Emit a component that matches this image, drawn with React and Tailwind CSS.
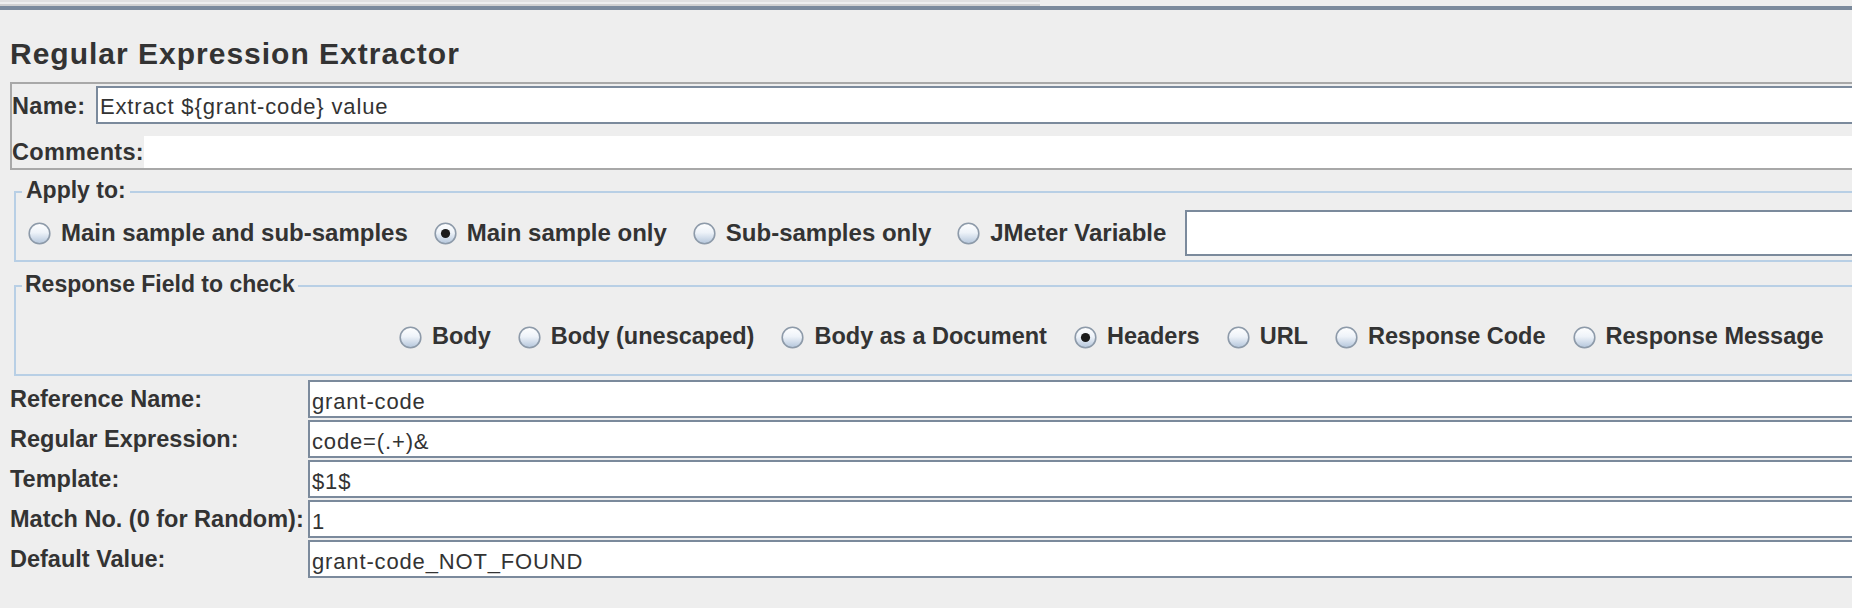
import React from 'react';

function Radio({ checked, label, className = '', textClass = 'text-[23.5px]' }) {
  return (
    <span className={`flex items-center ${className}`}>
      <svg width="23" height="23" viewBox="0 0 23 23" className="shrink-0">
        <defs>
          <linearGradient id="radioFill" x1="0" y1="0" x2="0" y2="1">
            <stop offset="0%" stopColor="#ffffff" />
            <stop offset="45%" stopColor="#eef3f9" />
            <stop offset="100%" stopColor="#b3c5db" />
          </linearGradient>
        </defs>
        <circle cx="11.5" cy="11.5" r="10.3" fill="url(#radioFill)" stroke="#8d9aa9" strokeWidth="1.6" />
        {checked && <circle cx="11.5" cy="11.5" r="4.6" fill="#1c1c1c" />}
      </svg>
      <span className={`ml-[10px] whitespace-nowrap font-bold leading-none ${textClass}`}>{label}</span>
    </span>
  );
}

function Field({ label, value }) {
  return (
    <div className="mb-[2px] flex h-[38px]">
      <div className="w-[298px] shrink-0 whitespace-nowrap pt-[8px] text-[23.5px] font-bold leading-none">
        {label}
      </div>
      <div className="flex-1 whitespace-nowrap border-y-2 border-l-2 border-[#7b8a9c] bg-white pl-[2px] pt-[9px] text-[22px] leading-none tracking-[0.85px]">
        {value}
      </div>
    </div>
  );
}

export default function App() {
  const applyTo = [
    { label: 'Main sample and sub-samples', checked: false },
    { label: 'Main sample only', checked: true },
    { label: 'Sub-samples only', checked: false },
  ];

  const responseFields = [
    { label: 'Body', checked: false },
    { label: 'Body (unescaped)', checked: false },
    { label: 'Body as a Document', checked: false },
    { label: 'Headers', checked: true },
    { label: 'URL', checked: false },
    { label: 'Response Code', checked: false },
    { label: 'Response Message', checked: false },
  ];

  return (
    <div className="h-[608px] w-full overflow-hidden bg-[#eeeeee] font-['Liberation_Sans',Arial,sans-serif] text-[#333333]">
      <div className="w-[1900px]">
        {/* top strips */}
        <div className="h-[2px] w-[1040px] bg-[#e0e0e0]" />
        <div className="h-[2px]" />
        <div className="h-[2px] w-[1040px] bg-[#d0d0d0]" />
        <div className="h-[4px] bg-[#7b8a9c]" />

        {/* Title */}
        <h1 className="mt-[26px] h-[36px] pl-[10px] text-[30px] font-bold leading-[36px] tracking-[1px]">
          Regular Expression Extractor
        </h1>

        {/* Name / Comments */}
        <div className="ml-[10px] mt-[10px] border-y-2 border-l-2 border-[#a8a8a8]">
          <div className="flex h-[40px] pt-[2px]">
            <div className="w-[84px] shrink-0 pt-[9px] text-[23.5px] font-bold leading-none tracking-[0.3px]">Name:</div>
            <div className="h-[38px] flex-1 border-y-2 border-l-2 border-[#7b8a9c] bg-white pl-[2px] pt-[8px] text-[22px] leading-none tracking-[0.85px]">
              Extract ${'{'}grant-code{'}'} value
            </div>
          </div>
          <div className="mt-[12px] flex h-[32px]">
            <div className="w-[132px] shrink-0 pt-[5px] text-[23.5px] font-bold leading-none tracking-[0.3px]">Comments:</div>
            <div className="flex-1 bg-white" />
          </div>
        </div>

        {/* Apply to */}
        <fieldset className="ml-[14px] mt-[9px] border-2 border-[#b8cfe5] pb-[4px] pl-[6px] pt-[6px]">
          <legend className="px-[4px] pb-[2px] text-[23px] font-bold leading-none">Apply to:</legend>
          <div className="flex h-[46px] items-center pl-[6px]">
            {applyTo.map((r) => (
              <Radio key={r.label} label={r.label} checked={r.checked} textClass="text-[24px]" className="mr-[26px]" />
            ))}
            <Radio label="JMeter Variable" checked={false} textClass="text-[24px]" className="mr-[19px]" />
            <div className="h-[46px] flex-1 border-y-2 border-l-2 border-[#7b8a9c] bg-white" />
          </div>
        </fieldset>

        {/* Response Field to check */}
        <fieldset className="ml-[14px] mt-[11px] border-2 border-[#b8cfe5] pb-[25px] pl-[6px] pt-[27px]">
          <legend className="px-[3px] pb-[2px] text-[23px] font-bold leading-none">Response Field to check</legend>
          <div className="flex h-[24px] items-center gap-[27px] pl-[377px]">
            {responseFields.map((r) => (
              <Radio key={r.label} label={r.label} checked={r.checked} />
            ))}
          </div>
        </fieldset>

        {/* Fields */}
        <div className="ml-[10px] mt-[4px]">
          <Field label="Reference Name:" value="grant-code" />
          <Field label="Regular Expression:" value="code=(.+)&" />
          <Field label="Template:" value="$1$" />
          <Field label="Match No. (0 for Random):" value="1" />
          <Field label="Default Value:" value="grant-code_NOT_FOUND" />
        </div>
      </div>
    </div>
  );
}
